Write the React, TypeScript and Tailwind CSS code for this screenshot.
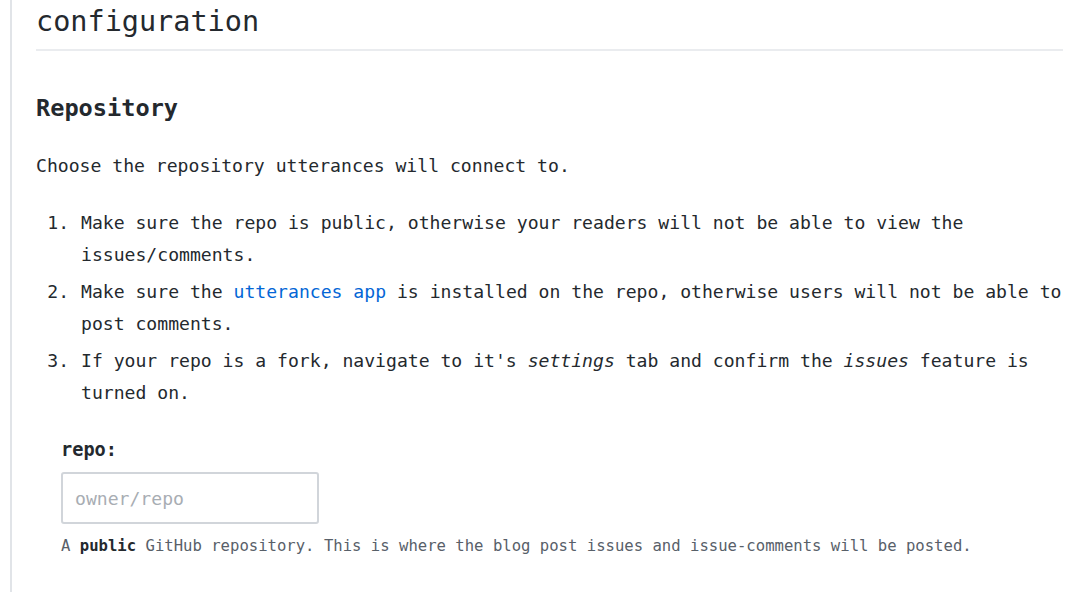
export default function App() {
  const mono = { fontFamily: '"DejaVu Sans Mono", "Liberation Mono", monospace' }

  return (
    <div className="h-[592px] w-[1089px] overflow-hidden bg-white pl-[10px] text-[#24292e]" style={mono}>
      <div className="h-full border-l-[2px] border-[#e1e4e8] pl-[24px] pr-[26px]">
        <h1 className="border-b-[2px] border-[#eaecef] pt-[2px] pb-[7px] text-[28.5px] leading-[40px] font-normal">
          configuration
        </h1>

        <h2 className="mt-[41px] text-[23.6px] leading-[32px] font-bold">Repository</h2>

        <p className="mt-[26px] text-[18.1px] leading-[32px]">Choose the repository utterances will connect to.</p>

        <ol className="mt-[25px] flex list-decimal flex-col gap-[5px] pl-[44px] text-[18.1px] leading-[32px] marker:text-[#24292e]">
          <li className="pl-[1px]">
            Make sure the repo is public, otherwise your readers will not be able to view the issues/comments.
          </li>
          <li className="pl-[1px]">
            Make sure the{" "}
            <a href="#" className="text-[#0366d6]">
              utterances app
            </a>{" "}
            is installed on the repo, otherwise users will not be able to post comments.
          </li>
          <li className="pl-[1px]">
            If your repo is a fork, navigate to it's <em>settings</em> tab and confirm the <em>issues</em> feature is
            turned on.
          </li>
        </ol>

        <div className="mt-[26px] pl-[25px]">
          <label className="block text-[18.6px] leading-[30px] font-bold">repo:</label>
          <input
            type="text"
            placeholder="owner/repo"
            className="mt-[7px] h-[52px] w-[258px] rounded-[3px] border-[2px] border-[#d1d5da] px-[12px] text-[18.1px] placeholder:text-[#a8adb3] focus:outline-none"
            style={mono}
          />
          <p className="mt-[7px] text-[15.6px] leading-[30px] text-[#586069]">
            A <strong className="text-[#24292e]">public</strong> GitHub repository. This is where the blog post issues
            and issue-comments will be posted.
          </p>
        </div>
      </div>
    </div>
  )
}
